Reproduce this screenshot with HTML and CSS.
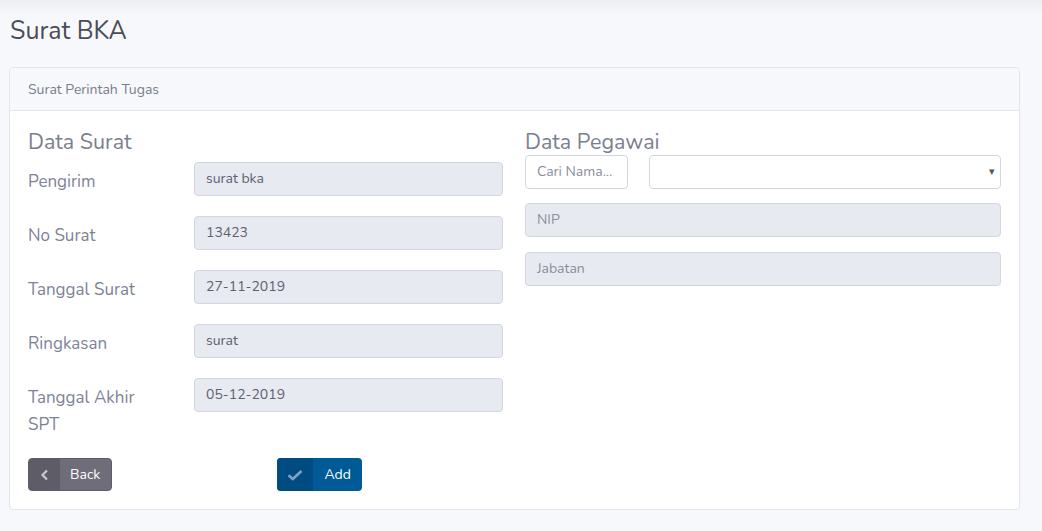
FILE: index.html
```html
<!DOCTYPE html>
<html lang="id">
<head>
<meta charset="utf-8">
<title>Surat BKA</title>
<link rel="stylesheet" href="styles.css">
</head>
<body>
<div class="topshade"></div>
<main class="page">
  <h1 class="page-title">Surat BKA</h1>
  <section class="card">
    <header class="card-header">Surat Perintah Tugas</header>
    <div class="card-body">
      <div class="col">
        <h2 class="section-title">Data Surat</h2>
        <div class="form-row">
          <label class="label">Pengirim</label>
          <div class="input filled">surat bka</div>
        </div>
        <div class="form-row">
          <label class="label">No Surat</label>
          <div class="input filled">13423</div>
        </div>
        <div class="form-row">
          <label class="label">Tanggal Surat</label>
          <div class="input filled">27-11-2019</div>
        </div>
        <div class="form-row">
          <label class="label">Ringkasan</label>
          <div class="input filled">surat</div>
        </div>
        <div class="form-row">
          <label class="label">Tanggal Akhir SPT</label>
          <div class="input filled">05-12-2019</div>
        </div>
        <div class="actions">
          <button class="btn btn-back" type="button">
            <span class="btn-icon"><svg width="10" height="12" viewBox="0 0 10 12"><path d="M7 1.5 L2.5 6 L7 10.5" fill="none" stroke="#c9c8d0" stroke-width="2.2"/></svg></span>
            <span class="btn-text">Back</span>
          </button>
          <button class="btn btn-add" type="button">
            <span class="btn-icon"><svg width="16" height="12" viewBox="0 0 16 12"><path d="M1.5 6.2 L5.8 10 L14.5 2" fill="none" stroke="#7fa3c2" stroke-width="2.6"/></svg></span>
            <span class="btn-text">Add</span>
          </button>
        </div>
      </div>
      <div class="col">
        <h2 class="section-title">Data Pegawai</h2>
        <div class="search-row">
          <div class="input white placeholder">Cari Nama...</div>
          <div class="input white select"><span class="caret">▾</span></div>
        </div>
        <div class="input filled placeholder stacked">NIP</div>
        <div class="input filled placeholder stacked">Jabatan</div>
      </div>
    </div>
  </section>
</main>
</body>
</html>
```

FILE: styles.css
```css
* { box-sizing: border-box; }
html, body { margin: 0; padding: 0; }
body {
  background: #f7f8fb;
  font-family: "Nunito", "Lato", "Open Sans", sans-serif;
  color: #5d6170;
  position: relative;
  min-height: 531px;
}
.topshade {
  position: absolute;
  left: 0; right: 0; top: 0;
  height: 14px;
  background: linear-gradient(#eceef3, rgba(247,248,251,0));
}
.page {
  position: relative;
  padding: 14px 22px 0 9px;
}
.page-title {
  margin: 0 0 19px 1px;
  font-size: 25px;
  font-weight: 400;
  line-height: 34px;
  color: #4a4c57;
}
.card {
  border: 1px solid #e2e5ee;
  border-radius: 4px;
  background: #fff;
  overflow: hidden;
}
.card-header {
  height: 43px;
  background: #f7f8fb;
  border-bottom: 1px solid #e2e5ee;
  font-size: 14px;
  color: #777d8c;
  padding: 0 18px;
  display: flex;
  align-items: center;
}
.card-body {
  display: grid;
  grid-template-columns: 475px 476px;
  column-gap: 22px;
  padding: 18px 18px 18px 18px;
}
.section-title {
  margin: 0;
  font-size: 21.5px;
  font-weight: 400;
  line-height: 26px;
  color: #7b7f8e;
}
.col:first-child .section-title { margin-bottom: 7px; }
.col:last-child .section-title { margin-bottom: 0; }
.form-row {
  display: grid;
  grid-template-columns: 166px 1fr;
  margin-bottom: 20px;
  align-items: start;
}
.label {
  font-size: 17px;
  line-height: 27px;
  color: #7e8297;
  padding-top: 6px;
  padding-right: 40px;
}
.input {
  height: 34px;
  border: 1px solid #d3d6e2;
  border-radius: 4px;
  font-size: 14px;
  line-height: 32px;
  padding: 0 11px;
  color: #5d6170;
}
.filled { background: #e8eaf1; }
.white { background: #fff; }
.placeholder { color: #8a8e9c; }
.search-row {
  display: grid;
  grid-template-columns: 103px 1fr;
  column-gap: 21px;
  margin-bottom: 14px;
}
.search-row .input { height: 34px; }
.select {
  position: relative;
}
.caret {
  position: absolute;
  right: 5px;
  top: 0;
  font-size: 11px;
  color: #555;
}
.stacked { margin-bottom: 15px; }
.actions {
  display: flex;
  gap: 165px;
  margin-top: 6px;
}
.btn {
  display: flex;
  height: 33px;
  border: none;
  border-radius: 4px;
  padding: 0;
  overflow: hidden;
  font-family: inherit;
  font-size: 14px;
  color: #fff;
  cursor: pointer;
}
.btn-icon {
  display: flex;
  align-items: center;
  justify-content: center;
}
.btn-text {
  display: flex;
  align-items: center;
}
.btn-back { background: #6e6d79; border: 1px solid #5e5d67; }
.btn-back .btn-icon { width: 31px; background: #5e5d67; }
.btn-back .btn-text { padding: 0 11px 0 10px; }
.btn-add { background: #005a96; }
.btn-add .btn-icon { width: 36px; background: #004b7f; }
.btn-add .btn-text { padding: 0 11px 0 11px; }
```
